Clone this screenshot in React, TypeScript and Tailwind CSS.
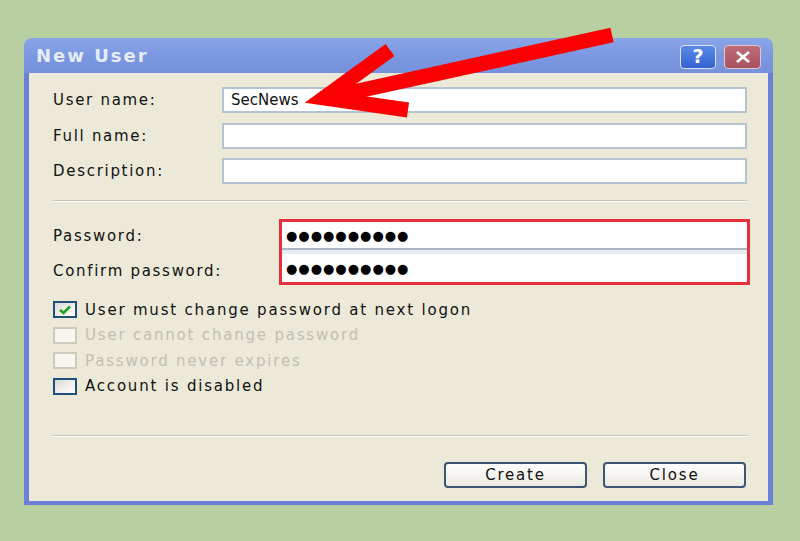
import React from 'react';

const font = { fontFamily: '"DejaVu Sans", Verdana, sans-serif' };

const TextRow: React.FC<{ label: string; value?: string }> = ({ label, value }) => (
	<div className="flex items-center h-[26px]">
		<div className="w-[169px] text-[15px] tracking-[1.7px] text-[#111]">{label}</div>
		<div className="flex-1 h-[26px] bg-white border-2 border-[#b4c3cf] flex items-center pl-[7px] text-[15px] text-[#111]">
			{value}
		</div>
	</div>
);

const Check: React.FC<{ label: string; checked?: boolean; disabled?: boolean }> = ({ label, checked, disabled }) => (
	<div className="flex items-center h-[25.5px]">
		<div
			className={`w-[24px] h-[17px] border-2 flex items-center justify-center ${
				disabled ? 'border-[#cdcabb] bg-[#f6f5ef]' : 'border-[#1f4f7f] bg-gradient-to-br from-[#dcdad2] to-white'
			}`}
		>
			{checked && (
				<svg width="14" height="10" viewBox="0 0 14 10">
					<path d="M2 5 L5.5 8 L12 1.5" stroke="#21a121" strokeWidth="2.6" fill="none" />
				</svg>
			)}
		</div>
		<span className={`ml-[8px] text-[15px] tracking-[1.8px] ${disabled ? 'text-[#c2bfb2]' : 'text-[#111]'}`}>{label}</span>
	</div>
);

const Dots: React.FC = () => (
	<span className="text-[13px] tracking-[1px] text-black leading-none">●●●●●●●●●●</span>
);

export default function App() {
	return (
		<div className="relative w-[800px] h-[541px] overflow-hidden bg-[#b8cfa2] pt-[38px] pl-[24px]" style={font}>
			<div className="w-[749px] h-[467px] flex flex-col rounded-t-[8px] overflow-hidden">
				{/* title bar */}
				<div className="h-[35px] flex items-center pl-[12px] pr-[12px] bg-gradient-to-b from-[#8aa5e8] via-[#7c98e1] to-[#7591dc]">
					<span className="text-[18px] font-bold tracking-[2px] text-[#e6edf9]">New User</span>
					<div className="ml-auto flex gap-[8px] mt-[2px]">
						<div className="w-[36px] h-[24px] rounded-[4px] border border-[#dbe4f7] bg-gradient-to-b from-[#5a8ae6] to-[#3462d2] flex items-center justify-center text-white text-[19px] font-bold">
							?
						</div>
						<div className="w-[37px] h-[24px] rounded-[4px] border border-[#e4c6cc] bg-gradient-to-b from-[#be6c78] to-[#a9525f] flex items-center justify-center">
							<svg width="18" height="14" viewBox="0 0 18 14">
								<path d="M3 2 L15 12 M15 2 L3 12" stroke="white" strokeWidth="2.8" />
							</svg>
						</div>
					</div>
				</div>

				{/* body */}
				<div className="flex-1 bg-[#ece9d8] border-x-[5px] border-b-[4px] border-[#6d7fd6] pl-[24px] pr-[21px] flex flex-col">
					<div className="mt-[14px]">
						<TextRow label="User name:" value="SecNews" />
					</div>
					<div className="mt-[10px]">
						<TextRow label="Full name:" />
					</div>
					<div className="mt-[9px]">
						<TextRow label="Description:" />
					</div>

					<div className="mt-[16px] h-[2px] border-t border-[#c5c2b2] border-b border-b-white" />

					<div className="mt-[17px] flex">
						<div className="w-[226px] flex flex-col text-[15px] tracking-[1.7px] text-[#111]">
							<div className="h-[35px] flex items-center">Password:</div>
							<div className="h-[31px] pt-[4px] flex items-center">Confirm password:</div>
						</div>
						<div className="w-[471px] h-[66px] -mr-[3px] border-[3px] border-[#e8303a] bg-white flex flex-col">
							<div className="h-[26px] flex items-center pl-[4px]">
								<Dots />
							</div>
							<div className="h-[2px] bg-[#a9b7c4]" />
							<div className="h-[4px] bg-[#e6ebef]" />
							<div className="h-[28px] flex items-center pl-[4px]">
								<Dots />
							</div>
						</div>
					</div>

					<div className="mt-[12px] flex flex-col">
						<Check label="User must change password at next logon" checked />
						<Check label="User cannot change password" disabled />
						<Check label="Password never expires" disabled />
						<Check label="Account is disabled" />
					</div>

					<div className="mt-[36px] h-[2px] border-t border-[#c5c2b2] border-b border-b-white" />

					<div className="mt-[25px] flex justify-end gap-[16px] pr-[1px]">
						<button className="w-[143px] h-[26px] rounded-[4px] border-2 border-[#3b5673] bg-gradient-to-b from-white to-[#ebe9e0] text-[15px] tracking-[1.8px] text-[#111]">
							Create
						</button>
						<button className="w-[143px] h-[26px] rounded-[4px] border-2 border-[#3b5673] bg-gradient-to-b from-white to-[#ebe9e0] text-[15px] tracking-[1.8px] text-[#111]">
							Close
						</button>
					</div>
				</div>
			</div>

			{/* red annotation arrow */}
			<svg className="absolute inset-0 pointer-events-none" width="800" height="541" viewBox="0 0 800 541">
				<line x1="612" y1="35" x2="335" y2="96" stroke="#fa0000" strokeWidth="15" />
				<path d="M390 50 L324 98 L408 110" stroke="#fa0000" strokeWidth="15" fill="none" strokeLinejoin="miter" strokeMiterlimit="10" />
			</svg>
		</div>
	);
}
